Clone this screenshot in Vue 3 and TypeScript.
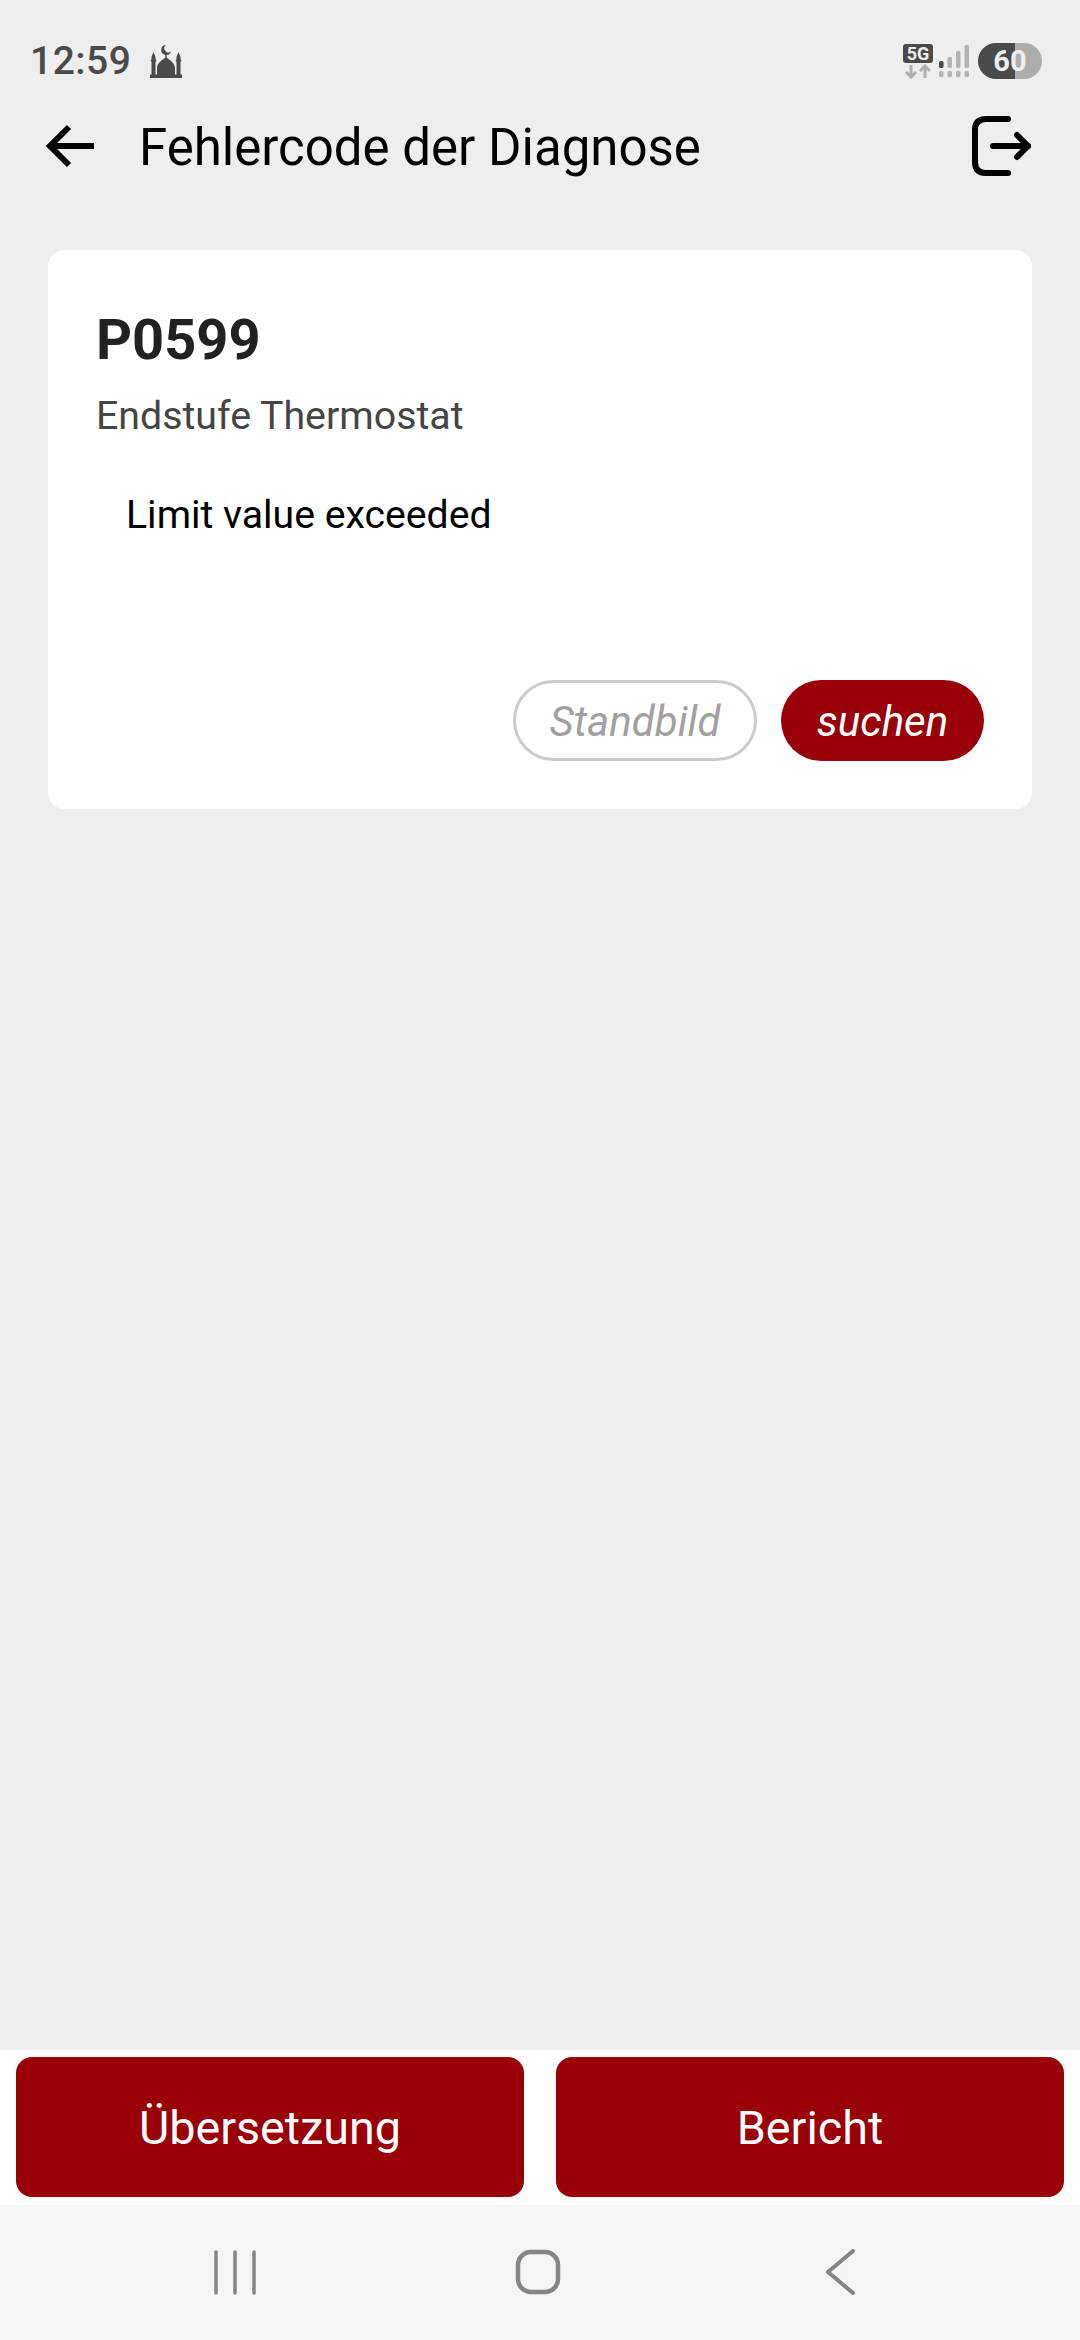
<script setup lang="ts">
const code = 'P0599'
const description = 'Endstufe Thermostat'
const detail = 'Limit value exceeded'
</script>

<template>
  <div class="page">
    <div class="status">
      <span class="time">12:59</span>
      <svg class="mosque" width="32" height="33" viewBox="0 0 32 33" fill="#4a4a4a">
        <path d="M16 0a5 5 0 1 0 5 6.500 4 4 0 1 1-5-6.500z" />
        <path d="M15.300 9h1.400v3h-1.400z" />
        <path d="M16 11.500c1.500 3 9 5 9 12V30H7v-6.500c0-7 7.500-9 9-12z" />
        <path d="M1.500 12l2-5 2 5v2.500h.7v2h-.7V30h-4V16.500H.8v-2h.7zM26.500 12l2-5 2 5v2.500h.7v2h-.7V30h-4V16.500h-.7v-2h.7z" />
        <path d="M0 29.500h32V33H0z" />
      </svg>
      <div class="status-right">
        <div class="net">
          <span class="net-badge">5G</span>
          <svg width="30" height="15" viewBox="0 0 30 15" fill="none" stroke="#b0b0b0" stroke-width="3">
            <path d="M8 1v11M3 8l5 5 5-5M22 14V3M17 7l5-5 5 5" />
          </svg>
        </div>
        <svg class="signal" width="31" height="32" viewBox="0 0 31 32">
          <g fill="#b3b3b3">
            <rect x="0" y="26" width="4.500" height="6" rx="1.500" />
            <rect x="8.500" y="26" width="4.500" height="6" rx="1.500" />
            <rect x="17" y="26" width="4.500" height="6" rx="1.500" />
            <rect x="25.500" y="26" width="4.500" height="6" rx="1.500" />
            <rect x="8.500" y="12" width="4.500" height="11" rx="1.500" />
            <rect x="17" y="6" width="4.500" height="17" rx="1.500" />
            <rect x="25.500" y="0" width="4.500" height="23" rx="1.500" />
          </g>
          <rect x="0" y="16" width="4.500" height="7" rx="1.500" fill="#4a4a4a" />
        </svg>
        <div class="battery"><span>60</span></div>
      </div>
    </div>

    <header class="topbar">
      <svg class="back" width="50" height="44" viewBox="0 0 50 44" fill="none" stroke="#000" stroke-width="6">
        <path d="M49 22H5" />
        <path d="M24 3L5 22l19 19" />
      </svg>
      <h1 class="title">Fehlercode der Diagnose</h1>
      <svg class="logout" width="60" height="60" viewBox="0 0 60 60" fill="none" stroke="#000" stroke-width="6" stroke-linecap="round" stroke-linejoin="round">
        <path d="M36 3H14Q3 3 3 14v32q0 11 11 11h22" />
        <path d="M21 30h35" />
        <path d="M45 19l11 11-11 11" />
      </svg>
    </header>

    <main class="content">
      <section class="card">
        <div class="code">{{ code }}</div>
        <div class="desc">{{ description }}</div>
        <p class="detail">{{ detail }}</p>
        <div class="actions">
          <button type="button" class="pill pill-off">Standbild</button>
          <button type="button" class="pill pill-on">suchen</button>
        </div>
      </section>
    </main>

    <footer class="footer">
      <button type="button" class="big-btn">Übersetzung</button>
      <button type="button" class="big-btn">Bericht</button>
    </footer>

    <nav class="sysnav">
      <svg width="46" height="46" viewBox="0 0 46 46" fill="none" stroke="#858585" stroke-width="3.500" stroke-linecap="round">
        <path d="M4 3v41M23 3v41M42 3v41" />
      </svg>
      <svg width="46" height="46" viewBox="0 0 46 46" fill="none" stroke="#858585" stroke-width="4.500">
        <rect x="3" y="3" width="40" height="40" rx="13" />
      </svg>
      <svg width="46" height="46" viewBox="0 0 46 46" fill="none" stroke="#858585" stroke-width="4" stroke-linecap="round" stroke-linejoin="round">
        <path d="M35 2L10 23l25 21" />
      </svg>
    </nav>
  </div>
</template>

<style>
html,
body {
  margin: 0;
  background: #eeeeee;
}
</style>

<style scoped>
.page {
  display: flex;
  flex-direction: column;
  height: 2340px;
  background: #eeeeee;
  font-family: Roboto, 'Noto Sans', sans-serif;
}
.status {
  display: flex;
  align-items: center;
  height: 36px;
  padding: 43px 38px 0 30px;
  color: #4a4a4a;
}
.time {
  font-size: 39px;
  font-weight: 500;
  letter-spacing: 0.5px;
}
.mosque {
  margin-left: 19px;
}
.status-right {
  display: flex;
  align-items: center;
  margin-left: auto;
}
.net {
  display: flex;
  flex-direction: column;
  align-items: center;
  gap: 1px;
  width: 30px;
}
.net-badge {
  width: 30px;
  height: 19px;
  background: #4a4a4a;
  border-radius: 3px;
  color: #eee;
  font-size: 18px;
  font-weight: 700;
  line-height: 19px;
  text-align: center;
}
.signal {
  margin-left: 6px;
}
.battery {
  width: 64px;
  height: 36px;
  margin-left: 8px;
  border-radius: 18px;
  background: linear-gradient(90deg, #4a4a4a 0 58%, #adadad 58% 100%);
  color: #eee;
  font-size: 29px;
  font-weight: 700;
  line-height: 36px;
  text-align: center;
}
.topbar {
  display: flex;
  align-items: center;
  height: 60px;
  margin-top: 37px;
  padding: 0 48px 0 45px;
}
.title {
  margin: 2px 0 0 44px;
  font-size: 51px;
  font-weight: 400;
  color: #000;
}
.logout {
  margin-left: auto;
}
.content {
  flex: 1;
  padding: 74px 48px 0;
}
.card {
  display: flex;
  flex-direction: column;
  height: 559px;
  box-sizing: border-box;
  padding: 58px 48px 48px;
  background: #fff;
  border-radius: 16px;
}
.code {
  font-size: 56px;
  font-weight: 700;
  line-height: 64px;
  color: #222;
}
.desc {
  margin-top: 20px;
  font-size: 39.300px;
  line-height: 48px;
  color: #444;
}
.detail {
  margin: 50px 0 0 30px;
  font-size: 39.200px;
  line-height: 50px;
  color: #000;
}
.actions {
  display: flex;
  justify-content: flex-end;
  gap: 24px;
  margin-top: auto;
}
.pill {
  height: 81px;
  box-sizing: border-box;
  padding: 2px 0 0;
  border-radius: 41px;
  font-family: inherit;
  font-size: 42px;
  font-style: italic;
}
.pill-off {
  width: 244px;
  background: #fff;
  border: 3px solid #cccccc;
  color: #a0a0a0;
}
.pill-on {
  width: 203px;
  background: #990008;
  border: none;
  color: #fff;
}
.footer {
  display: flex;
  justify-content: space-between;
  height: 155px;
  box-sizing: border-box;
  padding: 7px 16px 8px;
  background: #fff;
}
.big-btn {
  width: 508px;
  padding: 2px 0 0;
  background: #990008;
  border: none;
  border-radius: 16px;
  color: #fff;
  font-family: inherit;
  font-size: 46.700px;
}
.sysnav {
  display: flex;
  align-items: center;
  justify-content: space-between;
  height: 135px;
  box-sizing: border-box;
  padding: 0 216px 2px 212px;
  background: #f5f5f5;
}
</style>
